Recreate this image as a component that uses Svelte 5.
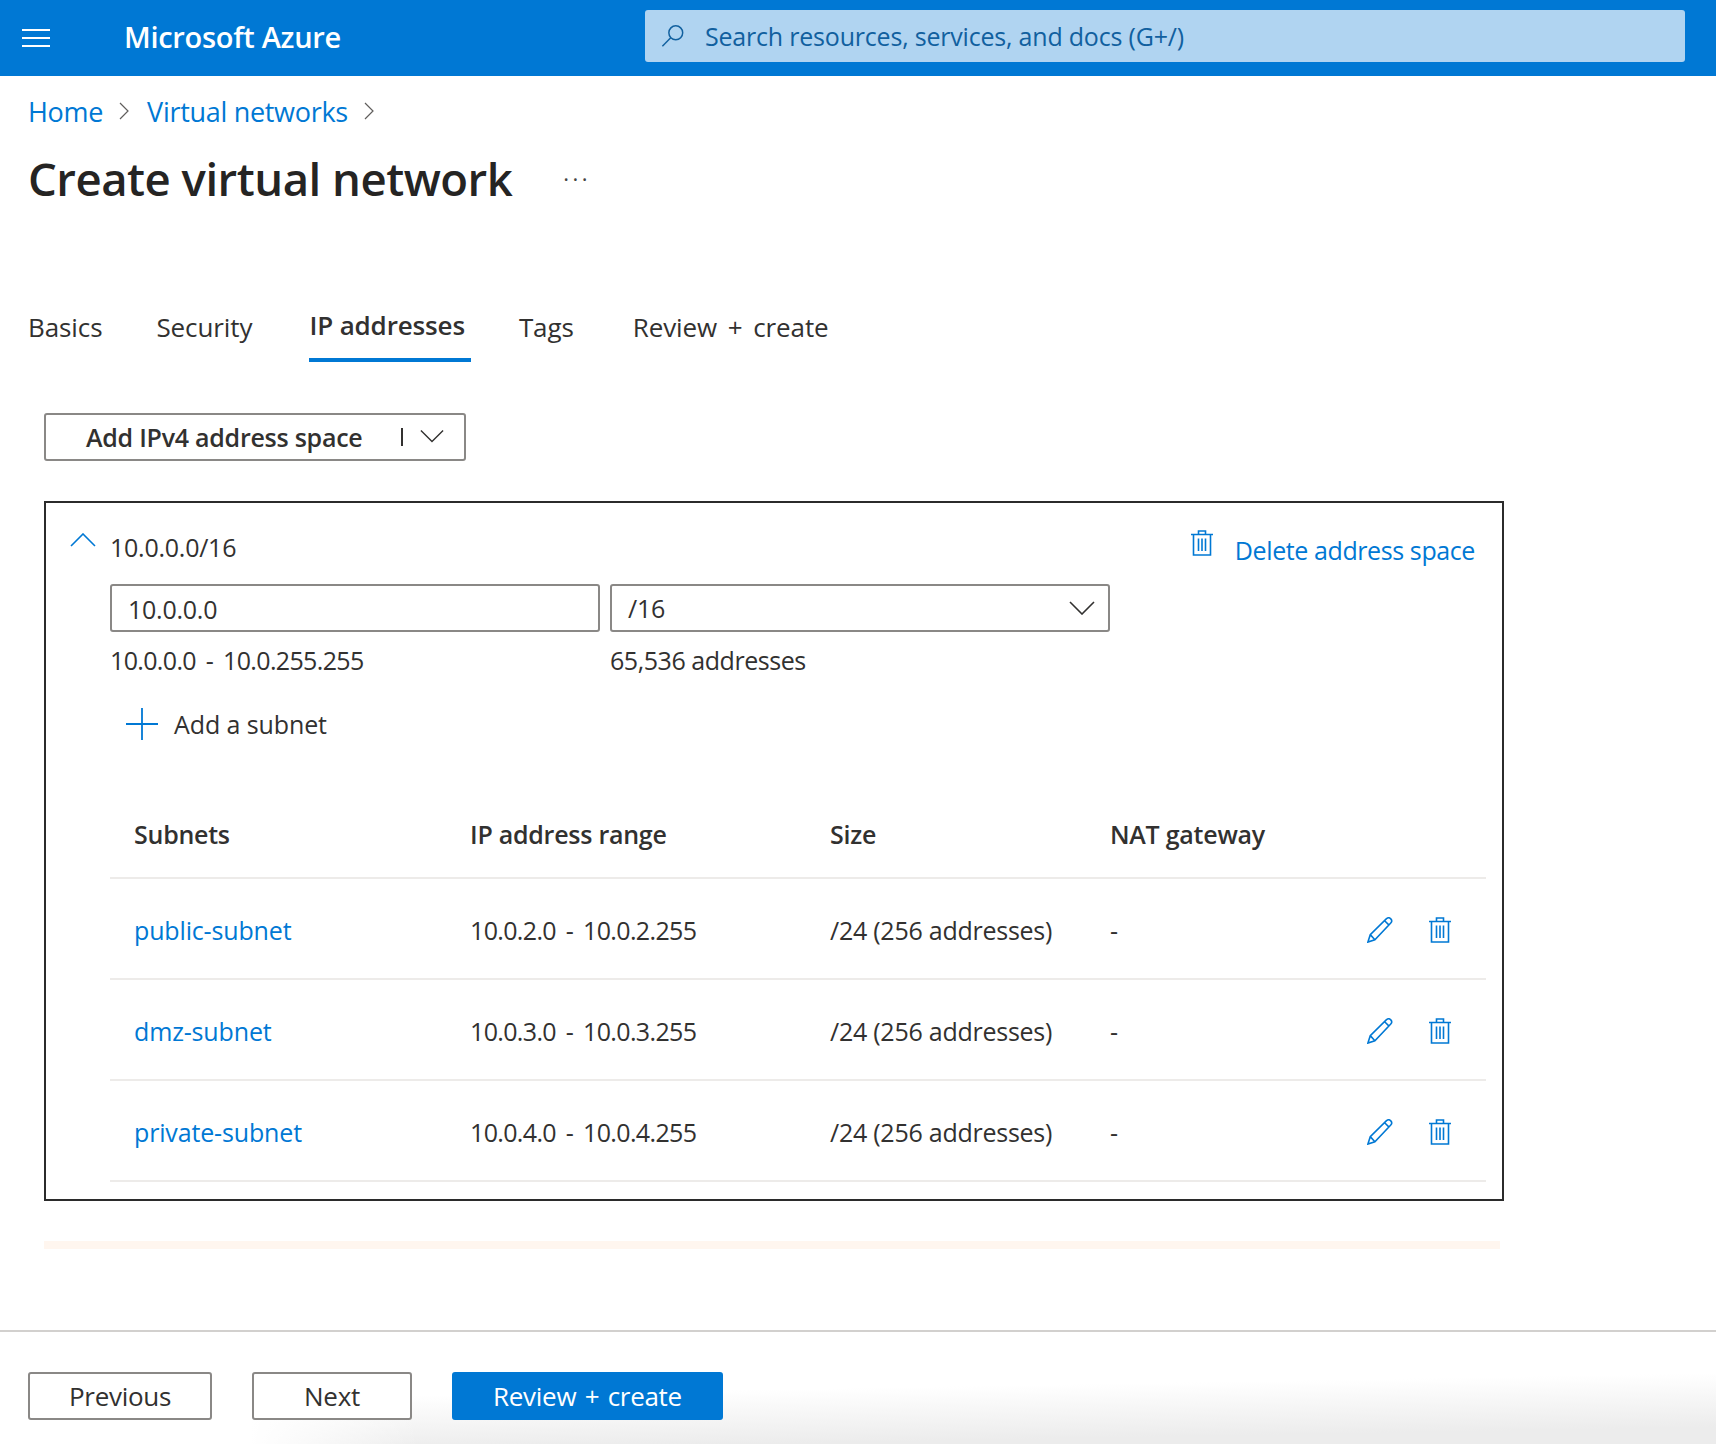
<script>
	let tabs = [
		{ name: 'Basics' },
		{ name: 'Security' },
		{ name: 'IP addresses', active: true },
		{ name: 'Tags' },
		{ name: 'Review + create' }
	];

	let subnets = [
		{ name: 'public-subnet', range: '10.0.2.0 - 10.0.2.255' },
		{ name: 'dmz-subnet', range: '10.0.3.0 - 10.0.3.255' },
		{ name: 'private-subnet', range: '10.0.4.0 - 10.0.4.255' }
	];
</script>

{#snippet trash()}
	<svg class="icon-trash" viewBox="0 0 22 26" fill="none" stroke="#0078d4" stroke-width="1.6">
		<path d="M0 4.5h22M7.5 4.5V1h7v3.5M2.5 4.5V25h17V4.5M7.5 8.5V21M11 8.5V21M14.5 8.5V21" />
	</svg>
{/snippet}

<div class="page">
	<header class="topbar">
		<button class="menu" aria-label="Menu">
			<span></span><span></span><span></span>
		</button>
		<div class="brand">Microsoft Azure</div>
		<div class="search">
			<svg viewBox="0 0 26 26" fill="none" stroke="#11609f" stroke-width="1.6">
				<circle cx="16" cy="9.5" r="7.5" />
				<path d="M10.5 15L1.5 24" />
			</svg>
			<span>Search resources, services, and docs (G+/)</span>
		</div>
	</header>

	<main class="content">
		<nav class="crumbs">
			<a href="/">Home</a>
			<svg viewBox="0 0 10 18" fill="none" stroke="#605e5c" stroke-width="1.2"><path d="M1 1l8 8-8 8" /></svg>
			<a href="/">Virtual networks</a>
			<svg viewBox="0 0 10 18" fill="none" stroke="#605e5c" stroke-width="1.2"><path d="M1 1l8 8-8 8" /></svg>
		</nav>

		<div class="title-row">
			<h1>Create virtual network</h1>
			<span class="more">···</span>
		</div>

		<div class="tabs">
			{#each tabs as tab}
				<div class="tab" class:active={tab.active}>{tab.name}</div>
			{/each}
		</div>

		<div class="body">
			<button class="add-space">
				<span>Add IPv4 address space</span>
				<i class="sep"></i>
				<svg viewBox="0 0 26 14" fill="none" stroke="#323130" stroke-width="1.5"><path d="M1 1l12 12L25 1" /></svg>
			</button>

			<section class="space">
				<div class="space-head">
					<svg class="collapse" viewBox="0 0 26 14" fill="none" stroke="#0078d4" stroke-width="1.6"><path d="M1 13L13 1l12 12" /></svg>
					<div class="cidr">10.0.0.0/16</div>
					<a class="delete" href="/">
						{@render trash()}
						<span>Delete address space</span>
					</a>
				</div>

				<div class="fields">
					<div class="field">10.0.0.0</div>
					<div class="field select">
						<span>/16</span>
						<svg viewBox="0 0 26 14" fill="none" stroke="#323130" stroke-width="1.6"><path d="M1 1l12 12L25 1" /></svg>
					</div>
				</div>
				<div class="fields hints">
					<div class="range">10.0.0.0 - 10.0.255.255</div>
					<div class="count">65,536 addresses</div>
				</div>

				<div class="add-subnet">
					<svg viewBox="0 0 32 32" stroke="#0078d4" stroke-width="1.8"><path d="M0 16h32M16 0v32" /></svg>
					<span>Add a subnet</span>
				</div>

				<div class="table">
					<div class="row head">
						<div>Subnets</div>
						<div>IP address range</div>
						<div>Size</div>
						<div>NAT gateway</div>
						<div></div>
					</div>
					{#each subnets as s}
						<div class="row">
							<a href="/">{s.name}</a>
							<div class="range">{s.range}</div>
							<div>/24 (256 addresses)</div>
							<div>-</div>
							<div class="actions">
								<svg class="icon-edit" viewBox="0 0 28 28" fill="none" stroke="#0078d4" stroke-width="1.7">
									<path d="M1 27l2.5-8L21 1.8c1.4-1.2 3.4-1.1 4.6.2 1.2 1.3 1.2 3.2 0 4.5L8.5 24.5zM3.5 19l5 5.5M19 4l5 5" />
								</svg>
								{@render trash()}
							</div>
						</div>
					{/each}
				</div>
			</section>

			<div class="notice"></div>
		</div>
	</main>

	<footer class="footer">
		<button class="btn prev">Previous</button>
		<button class="btn next">Next</button>
		<button class="btn primary">Review + create</button>
	</footer>
</div>

<style>
	:global(body) {
		margin: 0;
		background: #fff;
	}

	.page {
		width: 1716px;
		height: 1444px;
		overflow: hidden;
		display: flex;
		flex-direction: column;
		font-family: "Open Sans", "Noto Sans", sans-serif;
		font-size: 25px;
		letter-spacing: -0.25px;
		color: #323130;
	}

	a {
		color: #0078d4;
		text-decoration: none;
	}

	.topbar {
		height: 76px;
		flex: none;
		background: #0078d4;
		display: flex;
		align-items: center;
	}

	.menu {
		width: 28px;
		margin-left: 22px;
		padding: 0;
		background: none;
		border: none;
		display: flex;
		flex-direction: column;
		gap: 6px;
	}

	.menu span {
		height: 2px;
		background: #fff;
	}

	.brand {
		margin-left: 74px;
		margin-top: -4px;
		width: 521px;
		color: #fff;
		font-size: 29px;
		font-weight: 600;
		letter-spacing: -0.3px;
	}

	.search {
		width: 1040px;
		height: 52px;
		margin-top: -4px;
		background: #b0d4f1;
		border-radius: 3px;
		display: flex;
		align-items: center;
		color: #11609f;
		box-sizing: border-box;
		padding-left: 16px;
		gap: 20px;
		letter-spacing: -0.2px;
	}

	.search svg {
		width: 24px;
		height: 26px;
	}

	.content {
		flex: 1;
		padding-left: 28px;
	}

	.crumbs {
		margin-top: 15px;
		height: 40px;
		display: flex;
		align-items: center;
		font-size: 27px;
		letter-spacing: -0.3px;
	}

	.crumbs svg {
		width: 10px;
		height: 18px;
		margin: 0 18px 0 16px;
	}

	.title-row {
		margin-top: 19px;
		height: 56px;
		display: flex;
		align-items: center;
	}

	h1 {
		margin: 0;
		font-size: 45.5px;
		font-weight: 600;
		letter-spacing: -0.5px;
		color: #252423;
	}

	.more {
		margin-left: 51px;
		font-size: 22px;
		letter-spacing: 3.5px;
		color: #444;
	}

	.tabs {
		margin-top: 101px;
		height: 55px;
		display: flex;
		gap: 54px;
		font-size: 26px;
		letter-spacing: -0.1px;
	}

	.tab {
		box-sizing: border-box;
		height: 55px;
		padding-top: 2px;
	}

	.tab:nth-child(2) {
		margin-right: 2px;
	}

	.tab:nth-child(4) {
		margin-right: 5px;
	}

	.tab:nth-child(5) {
		word-spacing: 4px;
	}

	.tab.active {
		font-weight: 600;
		border-bottom: 4px solid #0078d4;
		padding: 0 6px 0 0;
		margin: 0 -6px 0 1px;
		letter-spacing: -0.15px;
	}

	.body {
		margin-left: 16px;
		margin-top: 51px;
	}

	.add-space {
		width: 422px;
		height: 48px;
		display: flex;
		align-items: center;
		background: #fff;
		border: 2px solid #8a8886;
		border-radius: 3px;
		padding: 0 0 0 40px;
		font: inherit;
		font-weight: 600;
		letter-spacing: inherit;
		color: #323130;
		box-sizing: border-box;
	}

	.sep {
		width: 2px;
		height: 18px;
		margin-left: 38px;
		background: #323130;
	}

	.add-space svg {
		width: 24px;
		height: 14px;
		margin-left: 17px;
		margin-top: -2px;
	}

	.space {
		margin-top: 40px;
		box-sizing: border-box;
		width: 1460px;
		height: 700px;
		border: 2px solid #2b2b2b;
		padding: 0 15px 0 64px;
	}

	.space-head {
		position: relative;
		height: 81px;
		display: flex;
		align-items: flex-start;
	}

	.collapse {
		position: absolute;
		left: -40px;
		top: 30px;
		width: 26px;
		height: 14px;
	}

	.cidr {
		margin-top: 27px;
	}

	.delete {
		margin-left: auto;
		margin-right: 12px;
		margin-top: 27px;
		display: flex;
		align-items: flex-start;
		gap: 22px;
		letter-spacing: -0.4px;
	}

	.delete span {
		margin-top: 3px;
	}

	.icon-trash {
		width: 22px;
		height: 26px;
	}

	.fields {
		display: flex;
		gap: 10px;
	}

	.field {
		box-sizing: border-box;
		width: 490px;
		height: 48px;
		border: 2px solid #8a8886;
		border-radius: 3px;
		padding: 1px 0 0 16px;
		display: flex;
		align-items: center;
	}

	.field.select {
		width: 500px;
		justify-content: space-between;
		padding: 0 13px 0 16px;
	}

	.field.select svg {
		width: 26px;
		height: 14px;
	}

	.hints {
		margin-top: 10px;
		height: 36px;
		align-items: center;
	}

	.hints .range {
		width: 490px;
	}

	.range {
		word-spacing: 4px;
		letter-spacing: -0.65px;
	}

	.count {
		letter-spacing: -0.45px;
	}

	.add-subnet {
		margin: 30px 0 0 16px;
		display: flex;
		align-items: center;
		gap: 16px;
		height: 32px;
	}

	.add-subnet svg {
		width: 32px;
		height: 32px;
	}

	.add-subnet span {
		letter-spacing: -0.1px;
	}

	.table {
		margin-top: 45px;
		width: 1376px;
	}

	.row {
		box-sizing: border-box;
		height: 101px;
		padding: 3px 0 0 24px;
		border-bottom: 2px solid #edebe9;
		display: grid;
		grid-template-columns: 336px 360px 280px 1fr 120px;
		align-items: center;
	}

	.row a {
		letter-spacing: -0.15px;
	}

	.row.head {
		height: 94px;
		padding-top: 6px;
		font-weight: 600;
	}

	.actions {
		display: flex;
		align-items: center;
		gap: 36px;
		padding-left: 1px;
	}

	.icon-edit {
		width: 26px;
		height: 26px;
	}

	.notice {
		margin-top: 40px;
		width: 1456px;
		height: 8px;
		background: #fff6ef;
	}

	.footer {
		flex: none;
		box-sizing: border-box;
		height: 114px;
		border-top: 2px solid #d2d0ce;
		padding: 40px 0 0 28px;
		display: flex;
		gap: 40px;
		background:
			linear-gradient(to right, #fff 250px, rgba(255, 255, 255, 0) 420px),
			linear-gradient(179deg, #fff 50%, #f4f4f4 72%, #ececec 88%);
	}

	.btn {
		height: 48px;
		border: 2px solid #8a8886;
		border-radius: 3px;
		background: #fff;
		font: inherit;
		font-size: 26px;
		letter-spacing: -0.3px;
		font-weight: 500;
		color: #323130;
	}

	.prev {
		width: 184px;
	}

	.next {
		width: 160px;
	}

	.btn.primary {
		width: 271px;
		background: #0078d4;
		border-color: #0078d4;
		color: #fff;
		word-spacing: 2px;
	}
</style>
